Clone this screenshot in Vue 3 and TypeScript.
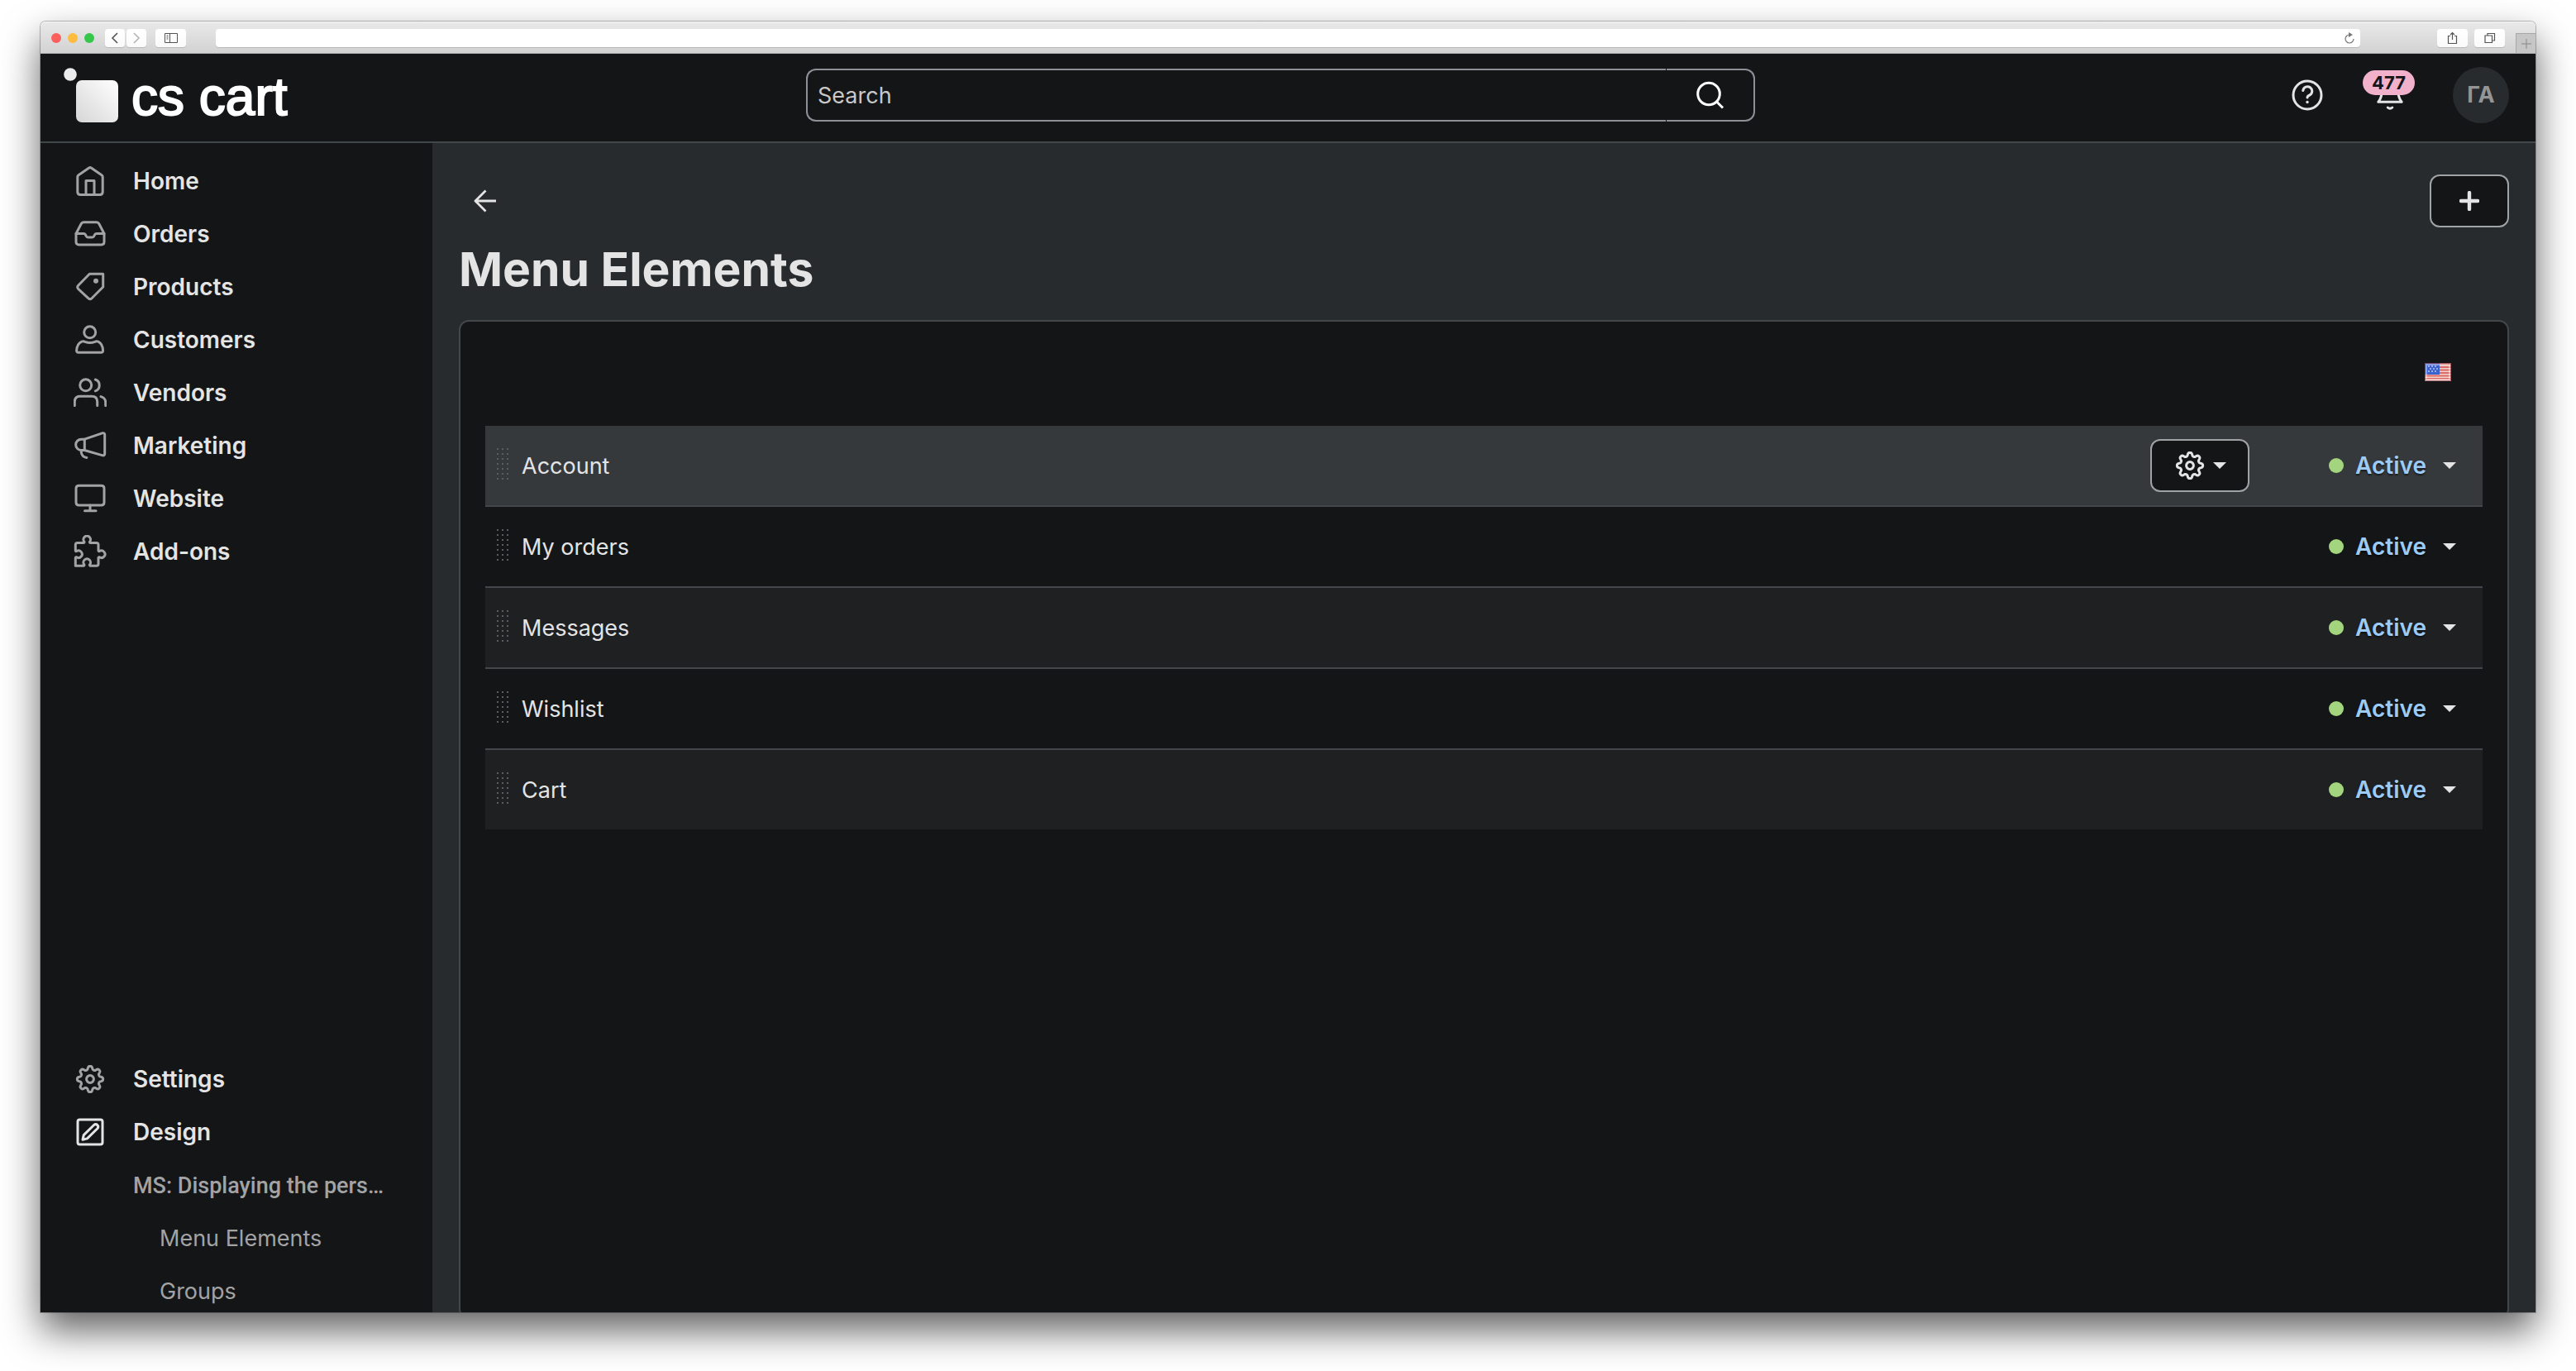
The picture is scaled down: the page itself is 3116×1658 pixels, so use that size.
<script setup lang="ts">
import { ref } from 'vue'

interface NavItem {
  label: string
  paths: string[]
  dot?: boolean
  active?: boolean
}

interface MenuElement {
  name: string
  hovered?: boolean
}

// Builds a closed outline with eight rounded teeth around the centre of a 40x40 box.
function gearOutline(): string {
  const steps = 160
  const points: string[] = []
  for (let i = 0; i < steps; i++) {
    const angle = (i / steps) * Math.PI * 2
    const wave = Math.tanh(1.6 * Math.cos(angle * 8)) / Math.tanh(1.6)
    const radius = 13.6 + 2 * wave
    points.push(`${(20 + radius * Math.cos(angle)).toFixed(2)} ${(20 + radius * Math.sin(angle)).toFixed(2)}`)
  }
  return `M${points.join('L')}Z`
}

const gearPaths = [gearOutline(), 'M24.4 20a4.4 4.4 0 1 1-8.8 0a4.4 4.4 0 1 1 8.8 0z']

const mainNav: NavItem[] = [
  {
    label: 'Home',
    paths: [
      'M4.8 15v18q0 3.5 3.5 3.5h23.4q3.5 0 3.5-3.5v-18q0-1.4-1.2-2.3L21.3 4.1q-1.3-1-2.6 0L6 12.7Q4.8 13.6 4.8 15z',
      'M15 36V19.5h10V36',
    ],
  },
  {
    label: 'Orders',
    paths: [
      'M3 19.5L9 8q1.2-2.2 3.5-2.2h15q2.3 0 3.5 2.2l6 11.5v10q0 3.4-3.4 3.4H6.4Q3 32.9 3 29.5z',
      'M3 19.5h9.4q1.2 0 1.8 1l1.2 2.2q.8 1.3 2.2 1.3h4.8q1.4 0 2.2-1.3l1.2-2.2q.6-1 1.8-1H37',
    ],
  },
  {
    label: 'Products',
    paths: ['M19.3 4.2H35.7V20L22 33.8q-2 1.6-4 0L5.6 22.3q-1.8-2 0-4z'],
    dot: true,
  },
  {
    label: 'Customers',
    paths: [
      'M26.7 10.8a7 7 0 1 1-14 0a7 7 0 1 1 14 0z',
      'M3.6 33.4q.2-8.4 6.2-11.2q2-.8 4 .2q6 2.4 12 0q2-1 4-.2q5.6 2.8 5.8 11.2q-.2 1.8-2 1.8H5.6q-1.8 0-2-1.8z',
    ],
  },
  {
    label: 'Vendors',
    paths: [
      'M21.7 10.8a7 7 0 1 1-14 0a7 7 0 1 1 14 0z',
      'M26.3 4a7.3 7.3 0 0 1 0 13.8',
      'M1.3 35.5v-4.5q0-6.8 6.8-6.8h13.8q6.8 0 6.8 6.8v4.5',
      'M33 24.6q5.7 1.6 5.7 7v3.9',
    ],
  },
  {
    label: 'Marketing',
    paths: [
      'M13.3 12.2L34.6 4.8q3.1-.8 3.1 2.2v22.4q0 3-3.1 2.2L13.3 25.5z',
      'M13.3 12.2H9.3a6.65 6.65 0 0 0 0 13.3h4',
      'M9.3 26v2.2q1 5.4 6.6 6.2',
    ],
  },
  {
    label: 'Website',
    paths: [
      'M6.5 4.2h27q3.5 0 3.5 3.5v16.7q0 3.5-3.5 3.5h-27q-3.5 0-3.5-3.5V7.7q0-3.5 3.5-3.5z',
      'M20 28v6.6',
      'M13.5 34.8h13.5',
    ],
  },
  {
    label: 'Add-ons',
    paths: [
      'M2.3 11.8q0-2.3 2.3-2.3h7.6q1-.2.7-1.3a4.3 4.3 0 1 1 6.6 0q-.3 1.1.7 1.3h7.5q2.3 0 2.3 2.3v7.1q.3 1 1.3.7a4.3 4.3 0 1 1 0 7.2q-1-.3-1.3.7v7.4q0 2.3-2.3 2.3h-7.5q-1-.2-.7-1.3a4.3 4.3 0 1 0-6.6 0q.3 1.1-.7 1.3H2.3v-9.7q.2-1 1.3-.7a4.3 4.3 0 1 0 0-7.2q-1.1.3-1.3-.7z',
    ],
  },
]

const secondaryNav: NavItem[] = [
  { label: 'Settings', paths: gearPaths },
  {
    label: 'Design',
    paths: [
      'M7.5 5h25q2.5 0 2.5 2.5v25q0 2.5-2.5 2.5h-25Q5 35 5 32.5v-25Q5 5 7.5 5z',
      'M11 29.2l1.3-5.6L24.9 11.3a3 3 0 0 1 4.2 4.2L16.5 27.9z',
    ],
    active: true,
  },
]

const elements: MenuElement[] = [
  { name: 'Account', hovered: true },
  { name: 'My orders' },
  { name: 'Messages' },
  { name: 'Wishlist' },
  { name: 'Cart' },
]

const query = ref('')
const address = ref('')
</script>

<template>
  <div class="desktop">
    <div class="window">
      <div class="titlebar">
        <div class="lights">
          <span class="light red"></span>
          <span class="light amber"></span>
          <span class="light green"></span>
        </div>
        <div class="history">
          <button class="chip small" type="button" aria-label="Back">
            <svg width="12" height="14" viewBox="0 0 12 14"><path d="M9 1L3 7l6 6" fill="none" stroke="#555" stroke-width="1.6" /></svg>
          </button>
          <button class="chip small" type="button" aria-label="Forward">
            <svg width="12" height="14" viewBox="0 0 12 14"><path d="M3 1l6 6-6 6" fill="none" stroke="#b4b4b4" stroke-width="1.6" /></svg>
          </button>
        </div>
        <button class="chip" type="button" aria-label="Toggle sidebar">
          <svg width="16" height="12" viewBox="0 0 16 12">
            <path d="M.5.5h15v11H.5zM6.5.5v11M2.5 3h2M2.5 5h2M2.5 7h2" fill="none" stroke="#555" />
          </svg>
        </button>
        <div class="address">
          <input v-model="address" type="text" aria-label="Address" />
          <button type="button" class="reload" aria-label="Reload">
            <svg width="14" height="14" viewBox="0 0 14 14">
              <path d="M7 3a5 5 0 1 0 5 5" fill="none" stroke="#777" stroke-width="1.2" />
              <path d="M6 0l5 3-5 3z" fill="#777" />
            </svg>
          </button>
        </div>
        <button class="chip" type="button" aria-label="Share">
          <svg width="13" height="16" viewBox="0 0 13 16">
            <path d="M4 5.5H1.5v9h10v-9H9M6.5 10V1.5M4 4l2.5-2.5L9 4" fill="none" stroke="#555" stroke-width="1.2" />
          </svg>
        </button>
        <button class="chip last" type="button" aria-label="Show all tabs">
          <svg width="14" height="14" viewBox="0 0 14 14">
            <path d="M1 4h8.5v8.5H1zM4 4V1.5h8.5V10H9.5" fill="none" stroke="#555" stroke-width="1.2" />
          </svg>
        </button>
        <button class="newtab" type="button" aria-label="New tab">
          <svg width="12" height="12" viewBox="0 0 12 12"><path d="M6 0v12M0 6h12" stroke="#888" /></svg>
        </button>
      </div>

      <header class="header">
        <a class="logo" href="#" aria-label="cs cart">
          <svg width="66" height="66" viewBox="0 0 66 66" aria-hidden="true">
            <defs>
              <linearGradient id="tile" x1="1" y1="0" x2="0" y2="1">
                <stop offset="0" stop-color="#ffffff" />
                <stop offset="1" stop-color="#d6d6d6" />
              </linearGradient>
            </defs>
            <circle cx="8" cy="8" r="7.8" fill="#ececec" />
            <rect x="15" y="15" width="51" height="51" rx="7" fill="url(#tile)" />
          </svg>
          <span class="wordmark">cs cart</span>
        </a>
        <form class="search" role="search" @submit.prevent>
          <input v-model="query" type="text" placeholder="Search" aria-label="Search" />
          <button type="submit" aria-label="Submit search">
            <svg width="36" height="36" viewBox="0 0 36 36">
              <circle cx="16" cy="16.5" r="13.3" fill="none" stroke="#fff" stroke-width="3" />
              <path d="M25.5 26l7.5 7.5" stroke="#fff" stroke-width="3" />
            </svg>
          </button>
        </form>
        <div class="account">
          <button class="plain" type="button" aria-label="Help">
            <svg class="icon bright" viewBox="0 0 40 40">
              <circle cx="20" cy="20" r="17" />
              <path d="M14.8 14.6a5.5 5.5 0 1 1 7.8 5.6q-2.6 1.2-2.6 2.7" />
              <circle cx="20" cy="28.5" r="1.7" class="solid" />
            </svg>
          </button>
          <button class="plain bell" type="button" aria-label="Notifications">
            <svg class="icon bright" viewBox="0 0 40 40">
              <path d="M5.8 28.3q4.2-5 4.2-12.3a10 10 0 0 1 20 0q0 7.3 4.2 12.3z" />
              <path d="M17.2 35q2.8 2.6 5.6 0" />
            </svg>
            <span class="badge">477</span>
          </button>
          <button class="avatar" type="button">ГА</button>
        </div>
      </header>

      <div class="body">
        <aside class="sidebar">
          <nav>
            <a v-for="item in mainNav" :key="item.label" class="navitem" href="#">
              <svg class="icon" viewBox="0 0 40 40" aria-hidden="true">
                <path v-for="d in item.paths" :key="d" :d="d" />
                <circle v-if="item.dot" cx="27" cy="12.8" r="3" class="solid" />
              </svg>
              <span>{{ item.label }}</span>
            </a>
          </nav>
          <nav class="lower">
            <a v-for="item in secondaryNav" :key="item.label" class="navitem" href="#">
              <svg class="icon" :class="{ bright: item.active }" viewBox="0 0 40 40" aria-hidden="true">
                <path v-for="d in item.paths" :key="d" :d="d" />
              </svg>
              <span>{{ item.label }}</span>
            </a>
            <a class="navitem section" href="#">MS: Displaying the pers…</a>
            <a class="navitem leaf" href="#">Menu Elements</a>
            <a class="navitem leaf" href="#">Groups</a>
          </nav>
        </aside>

        <main class="content">
          <div class="actions">
            <a class="back" href="#" aria-label="Go back">
              <svg width="28" height="28" viewBox="0 0 28 28">
                <path d="M27 14H2M14.5 1.5L2 14l12.5 12.5" fill="none" stroke="#e4e4e4" stroke-width="2.8" stroke-linejoin="round" />
              </svg>
            </a>
            <button class="boxed add" type="button" aria-label="Add element">
              <svg width="24" height="24" viewBox="0 0 24 24">
                <path d="M12 2v20M2 12h20" stroke="#e4e4e4" stroke-width="4.4" stroke-linecap="round" />
              </svg>
            </button>
          </div>
          <h1>Menu Elements</h1>
          <section class="card">
            <div class="toolbar">
              <button class="flag" type="button" aria-label="English">
                <svg width="32" height="22" viewBox="0 0 32 22">
                  <rect width="32" height="22" fill="#f3d3cf" />
                  <path d="M0 1.5h32M0 5h32M0 8.5h32M0 12h32M0 15.5h32M0 19h32" stroke="#dd6a62" stroke-width="1.8" />
                  <rect width="18" height="14" fill="#3c62d0" />
                  <path d="M4 4h12M6 7h10M4 10h12" stroke="#b9c8f2" stroke-width="1.4" stroke-dasharray="2 2" />
                  <rect x="2" y="2" width="28" height="18" fill="none" stroke="#fff" stroke-opacity=".4" stroke-width="2" />
                  <rect x=".5" y=".5" width="31" height="21" fill="none" stroke="#8c3f48" stroke-opacity=".7" />
                </svg>
              </button>
            </div>
            <table class="list">
              <tbody>
                <tr v-for="element in elements" :key="element.name" :class="{ hovered: element.hovered }">
                  <td class="grip">
                    <svg width="14" height="42" viewBox="0 0 14 42" aria-hidden="true">
                      <template v-for="row in 7" :key="row">
                        <rect v-for="col in 3" :key="col" :x="(col - 1) * 6" :y="(row - 1) * 6" width="2" height="2" />
                      </template>
                    </svg>
                  </td>
                  <td class="name">{{ element.name }}</td>
                  <td class="tools">
                    <button v-if="element.hovered" class="boxed gear" type="button" aria-label="Element actions">
                      <svg class="icon bright" viewBox="0 0 40 40">
                        <path v-for="d in gearPaths" :key="d" :d="d" />
                      </svg>
                      <span class="caret"></span>
                    </button>
                  </td>
                  <td class="state">
                    <button class="status" type="button">
                      <span class="dot"></span>
                      <span>Active</span>
                      <span class="caret"></span>
                    </button>
                  </td>
                </tr>
              </tbody>
            </table>
          </section>
        </main>
      </div>
    </div>
  </div>
</template>

<style>
body {
  background: #fff;
}
</style>

<style scoped>
* {
  box-sizing: border-box;
}

button {
  font: inherit;
  color: inherit;
  padding: 0;
  border: 0;
  background: none;
}

a {
  color: inherit;
  text-decoration: none;
}

svg {
  display: block;
}

.desktop {
  min-height: 100vh;
  padding: 26px 49px 71px;
  display: flex;
  overflow: hidden;
  font-family: Inter, 'Noto Sans', sans-serif;
  font-size: 27px;
  line-height: 40px;
  color: #e4e4e4;
}

.window {
  flex: 1;
  min-width: 0;
  display: flex;
  flex-direction: column;
  border-radius: 6px 6px 0 0;
  box-shadow: 0 0 0 1px rgba(0, 0, 0, 0.25), 0 22px 46px rgba(0, 0, 0, 0.62);
}

.titlebar {
  height: 39px;
  padding-left: 13px;
  display: flex;
  align-items: center;
  border-radius: 6px 6px 0 0;
  border-top: 1px solid #f4f4f4;
  border-bottom: 1px solid #b2b2b2;
  background: linear-gradient(#e9e9e9, #d2d2d2);
}

.lights {
  display: flex;
  gap: 8px;
}

.light {
  width: 12px;
  height: 12px;
  border-radius: 50%;
}

.red {
  background: #fc605c;
}

.amber {
  background: #fdbc40;
}

.green {
  background: #34c84a;
}

.history {
  display: flex;
  gap: 2px;
  margin: 0 11px 0 13px;
}

.chip {
  width: 37px;
  height: 22px;
  display: flex;
  align-items: center;
  justify-content: center;
  border-radius: 4px;
  background: linear-gradient(#fff, #fafafa);
  box-shadow: 0 1px 0 #b9b9b9;
}

.small {
  width: 24px;
}

.address {
  flex: 1;
  height: 22px;
  margin: 0 93px 0 36px;
  padding-right: 6px;
  display: flex;
  align-items: center;
  border-radius: 4px;
  background: #fff;
  box-shadow: 0 1px 0 #b9b9b9;
}

.address input {
  flex: 1;
  height: 20px;
  border: 0;
  background: none;
}

.last {
  margin: 0 13px 0 8px;
}

.newtab {
  width: 24px;
  height: 24px;
  align-self: flex-end;
  display: flex;
  align-items: center;
  justify-content: center;
  border: solid #a8a8a8;
  border-width: 1px 0 0 1px;
  background: #c6c6c6;
}

.header {
  height: 108px;
  padding: 0 32px 6px 14px;
  display: grid;
  grid-template-columns: 1fr 1148px 1fr;
  align-items: center;
  background: #141517;
  border-bottom: 2px solid #42474a;
}

.logo {
  padding-left: 14px;
  display: flex;
  align-items: center;
  gap: 16px;
}

.wordmark {
  padding-top: 4px;
  font: 64px/66px 'Liberation Sans', sans-serif;
  -webkit-text-stroke: 2px #fff;
  color: #fff;
}

.search {
  height: 64px;
  display: flex;
  gap: 1px;
}

.search input {
  flex: 1;
  min-width: 0;
  padding: 2px 12px 0;
  border: 2px solid #8e9098;
  border-right: 0;
  border-radius: 12px 0 0 12px;
  background: none;
  font: inherit;
  color: inherit;
}

.search input::placeholder {
  color: #c8c8c8;
  opacity: 1;
}

.search button {
  width: 107px;
  display: flex;
  align-items: center;
  justify-content: center;
  border: 2px solid #8e9098;
  border-left: 0;
  border-radius: 0 12px 12px 0;
}

.account {
  display: flex;
  align-items: center;
  justify-content: flex-end;
}

.plain {
  position: relative;
  margin-right: 60px;
}

.bell {
  margin-right: 56px;
}

.badge {
  position: absolute;
  left: -13px;
  top: -10px;
  width: 63px;
  height: 30px;
  border-radius: 15px;
  background: #f2b1ca;
  color: #141517;
  font-size: 22px;
  font-weight: 700;
  line-height: 30px;
  text-align: center;
}

.avatar {
  width: 68px;
  height: 68px;
  border-radius: 50%;
  background: #272b2e;
  color: #959595;
  font-weight: 700;
  text-align: center;
}

.icon {
  width: 40px;
  height: 40px;
  flex: none;
  fill: none;
  stroke: #a3a3a3;
  stroke-width: 3;
  stroke-linecap: round;
  stroke-linejoin: round;
}

.bright {
  stroke: #e4e4e4;
}

.solid {
  fill: #a3a3a3;
  stroke: none;
}

.bright .solid {
  fill: #e4e4e4;
}

.body {
  flex: 1;
  display: flex;
  overflow: hidden;
  background: #272b2e;
}

.sidebar {
  width: 474px;
  flex: none;
  padding-top: 14px;
  display: flex;
  flex-direction: column;
  justify-content: space-between;
  background: #141517;
}

.lower {
  margin-bottom: -6px;
}

.navitem {
  height: 64px;
  padding-left: 40px;
  display: flex;
  align-items: center;
  gap: 32px;
  font-size: 28px;
  font-weight: 600;
}

.section {
  padding-top: 2px;
  padding-left: 112px;
  font-family: Roboto, sans-serif;
  font-size: 27px;
  font-weight: 500;
  color: #a3a3a3;
  white-space: nowrap;
}

.leaf {
  padding-top: 2px;
  padding-left: 144px;
  font-size: 27px;
  font-weight: 400;
  color: #a3a3a3;
}

.content {
  flex: 1;
  min-width: 0;
  padding: 38px 32px 0;
  display: flex;
  flex-direction: column;
}

.actions {
  display: flex;
  align-items: center;
  justify-content: space-between;
}

.back {
  padding: 18px;
}

.boxed {
  height: 64px;
  display: flex;
  align-items: center;
  justify-content: center;
  border: 2px solid #a0a3a6;
  border-radius: 12px;
  background: #141517;
}

.add {
  width: 96px;
}

h1 {
  margin: 15px 0 25px;
  font-size: 57px;
  line-height: 72px;
  font-weight: 700;
}

.card {
  flex: 1;
  margin-bottom: -8px;
  padding: 30px;
  border: 2px solid #43474a;
  border-radius: 12px;
  background: #141517;
}

.toolbar {
  height: 62px;
  margin-bottom: 34px;
  padding-right: 38px;
  display: flex;
  align-items: center;
  justify-content: flex-end;
}

.list {
  width: 100%;
  border-collapse: separate;
  border-spacing: 0;
}

.list td {
  height: 98px;
  padding: 0;
  border-bottom: 2px solid #43474c;
}

.list tr:last-child td {
  height: 96px;
  border-bottom: 0;
}

.list tr:nth-child(odd) {
  background: #1e2022;
}

.list tr.hovered {
  background: #35393c;
}

.list .grip {
  width: 44px;
  padding-left: 14px;
}

.grip rect {
  fill: #5b5e60;
}

.list .name {
  padding-top: 2px;
}

.list .tools {
  width: 184px;
  padding-right: 64px;
}

.list .state {
  width: 218px;
}

.gear {
  width: 120px;
  gap: 8px;
}

.status {
  width: 100%;
  padding: 0 32px;
  display: flex;
  align-items: center;
  font-size: 28px;
  font-weight: 600;
  color: #9dcbf8;
  text-shadow: 0 2px 2px rgba(0, 0, 0, 0.5);
}

.dot {
  width: 18px;
  height: 18px;
  margin-right: 14px;
  border-radius: 50%;
  background: #a3d57e;
}

.caret {
  border: 8px solid transparent;
  border-top-color: #e4e4e4;
  border-bottom: 0;
}

.status .caret {
  margin-left: auto;
}
</style>
